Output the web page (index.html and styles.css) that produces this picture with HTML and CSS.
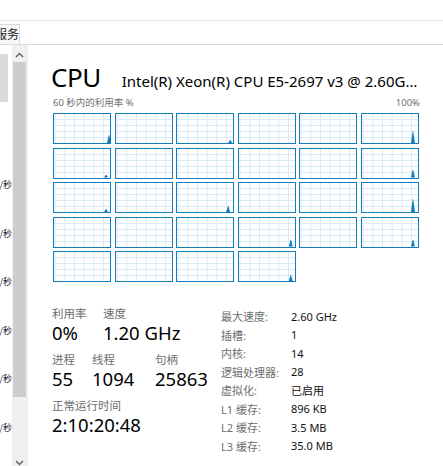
FILE: index.html
```html
<!DOCTYPE html>
<html lang="zh-CN">
<head>
<meta charset="utf-8">
<title>任务管理器 - CPU</title>
<link rel="stylesheet" href="styles.css">
</head>
<body>
<div class="topbar"></div>
<div class="tabs"><div class="tab">服务</div></div>
<div class="content">
  <div class="left">
    <div class="list">
      <div class="sel"></div>
      <div class="rate r1">0 KB/秒</div>
      <div class="rate">0 KB/秒</div>
      <div class="rate">0 KB/秒</div>
      <div class="rate">0 KB/秒</div>
      <div class="rate">0 KB/秒</div>
      <div class="rate">0 KB/秒</div>
    </div>
    <div class="scrollbar">
      <div class="arrow up"><svg width="9" height="6" viewBox="0 0 9 6"><path d="M1 5 L4.5 1.5 L8 5" fill="none" stroke="#606060" stroke-width="1.4"/></svg></div>
      <div class="thumb"></div>
      <div class="arrow down"><svg width="9" height="6" viewBox="0 0 9 6"><path d="M1 1 L4.5 4.5 L8 1" fill="none" stroke="#606060" stroke-width="1.4"/></svg></div>
    </div>
  </div>
  <div class="main">
    <div class="heading">
      <span class="title">CPU</span>
      <span class="model">Intel(R) Xeon(R) CPU E5-2697 v3 @ 2.60GHz</span>
    </div>
    <div class="axis"><span>60 秒内的利用率 %</span><span>100%</span></div>
    <div class="graphs">
      <div class="g"><i class="spike" style="left:53px;height:8px"></i></div>
      <div class="g"></div>
      <div class="g"><i class="spike" style="left:51px;height:3px"></i></div>
      <div class="g"></div>
      <div class="g"></div>
      <div class="g"><i class="spike" style="left:49px;height:12px"></i></div>

      <div class="g"><i class="spike" style="left:50px;height:3px"></i></div>
      <div class="g"></div>
      <div class="g"></div>
      <div class="g"></div>
      <div class="g"></div>
      <div class="g"><i class="spike" style="left:49px;height:8px"></i></div>

      <div class="g"><i class="spike" style="left:50px;height:3px"></i></div>
      <div class="g"></div>
      <div class="g"><i class="spike" style="left:49px;height:6px"></i></div>
      <div class="g"></div>
      <div class="g"></div>
      <div class="g"><i class="spike" style="left:49px;height:13px"></i></div>

      <div class="g"></div>
      <div class="g"></div>
      <div class="g"></div>
      <div class="g"><i class="spike" style="left:50px;height:7px"></i></div>
      <div class="g"></div>
      <div class="g"><i class="spike" style="left:49px;height:7px"></i></div>

      <div class="g"></div>
      <div class="g"></div>
      <div class="g"></div>
      <div class="g"><i class="spike" style="left:50px;height:6px"></i></div>
    </div>
    <div class="stats">
      <div class="dyn">
        <div class="row">
          <div class="stat w1"><div class="lbl">利用率</div><div class="val">0%</div></div>
          <div class="stat"><div class="lbl">速度</div><div class="val">1.20 GHz</div></div>
        </div>
        <div class="row">
          <div class="stat w2"><div class="lbl">进程</div><div class="val">55</div></div>
          <div class="stat w3"><div class="lbl">线程</div><div class="val">1094</div></div>
          <div class="stat"><div class="lbl">句柄</div><div class="val">25863</div></div>
        </div>
        <div class="row">
          <div class="stat"><div class="lbl">正常运行时间</div><div class="val">2:10:20:48</div></div>
        </div>
      </div>
      <dl class="info">
        <dt>最大速度:</dt><dd>2.60 GHz</dd>
        <dt>插槽:</dt><dd>1</dd>
        <dt>内核:</dt><dd>14</dd>
        <dt>逻辑处理器:</dt><dd>28</dd>
        <dt>虚拟化:</dt><dd>已启用</dd>
        <dt>L1 缓存:</dt><dd>896 KB</dd>
        <dt>L2 缓存:</dt><dd>3.5 MB</dd>
        <dt>L3 缓存:</dt><dd>35.0 MB</dd>
      </dl>
    </div>
  </div>
</div>
</body>
</html>
```
FILE: styles.css
```css
* { box-sizing: border-box; }
html, body { margin: 0; padding: 0; }
body {
  width: 443px;
  height: 466px;
  overflow: hidden;
  background: #ffffff;
  font-family: "Noto Sans", "Noto Sans CJK SC", sans-serif;
  color: #000;
  display: flex;
  flex-direction: column;
}
.topbar {
  height: 21px;
  border-bottom: 1px solid #e3e3e3;
  flex: none;
}
.tabs {
  height: 24px;
  border-bottom: 1px solid #dadada;
  flex: none;
  display: flex;
  align-items: flex-end;
}
.tab {
  height: 20px;
  width: 32px;
  margin-left: -12px;
  border: 1px solid #d9d9d9;
  border-bottom: none;
  background: #f7f7f7;
  font-family: "Noto Sans CJK SC", sans-serif;
  font-size: 12px;
  line-height: 18px;
  padding-left: 6px;
  color: #222;
}
.content {
  flex: 1;
  display: flex;
  min-height: 0;
}
.left {
  width: 28px;
  flex: none;
  display: flex;
  border-right: 1px solid #ececec;
}
.list {
  width: 12px;
  position: relative;
  overflow: hidden;
  display: flex;
  flex-direction: column;
}
.sel {
  width: 8px;
  height: 48px;
  margin-top: 9px;
  background: #d9d9d9;
  flex: none;
}
.rate {
  height: 48.6px;
  flex: none;
  display: flex;
  justify-content: flex-end;
  white-space: nowrap;
  font-family: "Noto Sans CJK SC", sans-serif;
  font-size: 9px;
  line-height: 14px;
  color: #1e2330;
}
.rate.r1 { margin-top: 76px; }
.scrollbar {
  width: 15px;
  background: #f0f0f0;
  display: flex;
  flex-direction: column;
}
.arrow {
  height: 17px;
  flex: none;
  display: flex;
  align-items: center;
  justify-content: center;
}
.arrow.up { padding-top: 2px; }
.thumb {
  height: 335px;
  margin: 0 1px;
  background: #cdcdcd;
  flex: none;
}
.arrow.down { margin-top: auto; height: 14px; align-items: flex-end; }

.main {
  flex: 1;
  padding: 10px 0 0 23px;
  min-width: 0;
}
.heading {
  display: flex;
  align-items: baseline;
  height: 42px;
  padding-top: 4px;
}
.title {
  font-size: 26px;
  font-weight: 400;
  letter-spacing: -0.5px;
  flex: none;
}
.model {
  margin-left: 21px;
  font-size: 15px;
  width: 300px;
  white-space: nowrap;
  overflow: hidden;
  text-overflow: ellipsis;
  flex: none;
}
.axis {
  width: 367px;
  margin-left: 2px;
  display: flex;
  justify-content: space-between;
  font-size: 9.5px;
  line-height: 12px;
  color: #707070;
  font-family: "Noto Sans", "Noto Sans CJK SC", sans-serif;
}
.graphs {
  margin: 4px 0 0 2px;
  display: grid;
  grid-template-columns: repeat(6, 58px);
  grid-auto-rows: 31px;
  column-gap: 3.6px;
  row-gap: 3.5px;
}
.g {
  position: relative;
  border: 1px solid #117dbb;
  background-color: #fff;
  background-image:
    linear-gradient(to right, #d9eaf4 1px, transparent 1px),
    linear-gradient(to bottom, #d9eaf4 1px, transparent 1px);
  background-size: 9.7px 6px, 9.7px 6px;
  background-position: 0.6px 0, 0 5px;
  overflow: hidden;
}
.spike {
  position: absolute;
  bottom: 0;
  width: 4px;
  background: #117dbb;
  clip-path: polygon(0 100%, 45% 0, 55% 0, 100% 100%);
}
.stats {
  display: flex;
  margin-top: 24px;
}
.dyn {
  width: 170px;
  flex: none;
  padding-left: 1px;
}
.row {
  display: flex;
  margin-bottom: 8px;
}
.stat { flex: none; }
.w1 { width: 51px; }
.w2 { width: 40px; }
.w3 { width: 63px; }
.lbl {
  font-family: "Noto Sans CJK SC", sans-serif;
  font-size: 11.5px;
  line-height: 15px;
  color: #6d6d6d;
}
.val {
  font-size: 18.5px;
  line-height: 23px;
  color: #000;
}
.info {
  margin: 1px 0 0 0;
  display: grid;
  grid-template-columns: 70px auto;
  grid-auto-rows: 18.5px;
  font-size: 11px;
  align-items: center;
}
.info dt {
  color: #6d6d6d;
  font-family: "Noto Sans", "Noto Sans CJK SC", sans-serif;
}
.info dd {
  margin: 0;
  color: #111;
  font-family: "Noto Sans", "Noto Sans CJK SC", sans-serif;
}
```
